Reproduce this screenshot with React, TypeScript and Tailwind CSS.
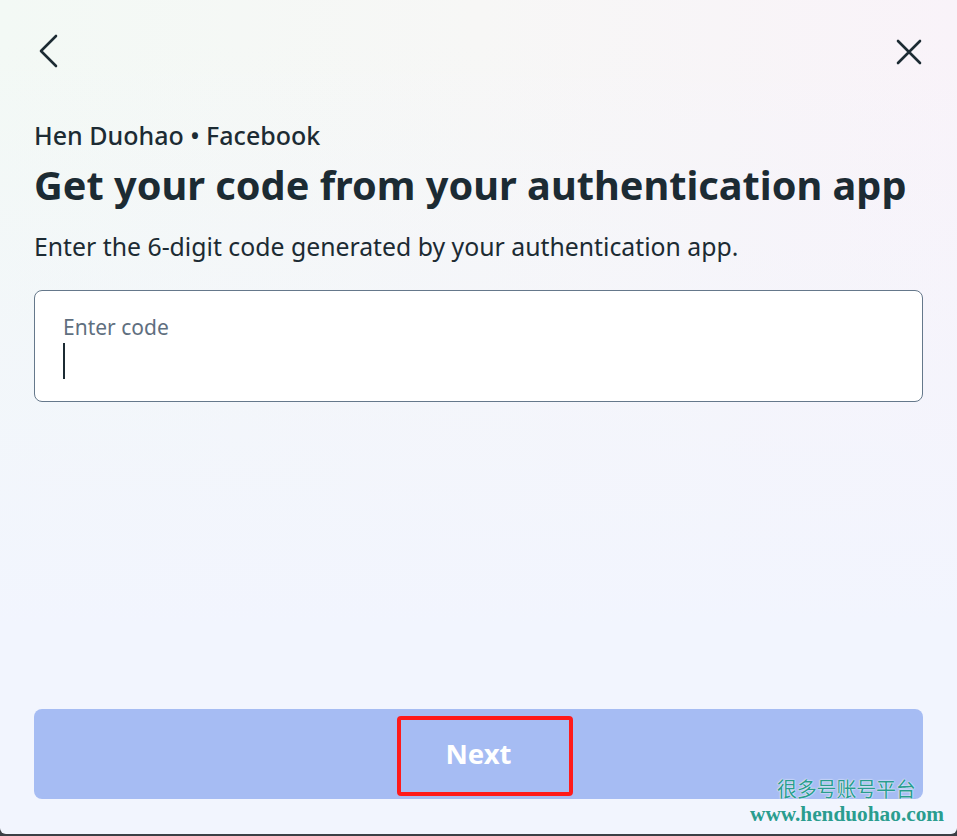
import React from 'react'

const ChevronLeft = () => (
    <svg width="26" height="38" viewBox="0 0 26 38" fill="none">
        <path d="M22 4 L7 19 L22 34" stroke="#1c2b33" strokeWidth="2.6" strokeLinecap="round" strokeLinejoin="round" />
    </svg>
)

const CloseIcon = () => (
    <svg width="28" height="28" viewBox="0 0 28 28" fill="none">
        <path d="M3 3 L25 25 M25 3 L3 25" stroke="#1c2b33" strokeWidth="2.6" strokeLinecap="round" />
    </svg>
)

const App = () => {
    return (
        <div className="w-[957px] h-[836px] bg-[#3b3f45] font-['Noto_Sans',sans-serif]">
            <div className="relative h-[834px] rounded-b-[6px] overflow-hidden flex flex-col px-[34px] bg-[linear-gradient(to_bottom,transparent_5%,#f2f5fe_75%),linear-gradient(to_right,#f3f9f5,#f7f7f6_50%,#f9f3f9)]">
                <div className="flex items-start justify-between pt-[32px] h-[70px]">
                    <button type="button"><ChevronLeft /></button>
                    <button type="button" className="mt-[6px]"><CloseIcon /></button>
                </div>

                <p className="mt-[50px] text-[25px] leading-[30px] font-medium text-[#1c2b33]">Hen Duohao • Facebook</p>
                <h1 className="mt-[11px] text-[39.7px] leading-[48px] font-bold text-[#1c2b33]">Get your code from your authentication app</h1>
                <p className="mt-[22px] text-[24.8px] leading-[30px] text-[#1c2b33]">Enter the 6-digit code generated by your authentication app.</p>

                <div className="mt-[29px] h-[112px] bg-white border border-[#65788b] rounded-[8px] px-[28px] pt-[23px]">
                    <div className="text-[21px] leading-[26px] text-[#5f6f80]">Enter code</div>
                    <div className="mt-[3px] w-[2px] h-[36px] bg-[#1c2b33]" />
                </div>

                <div className="flex-1" />

                <button type="button" className="mb-[35px] h-[90px] w-full rounded-[8px] bg-[#a6bcf3] text-white text-[27.5px] font-bold">
                    Next
                </button>

                <div className="absolute left-[397px] top-[716px] w-[176px] h-[80px] border-[4px] border-[#ff1a1a] rounded-[4px]" />

                <div className="absolute left-[777px] top-[776px] text-[20px] leading-[26px] text-[#2a9d8f] tracking-[-0.2px] font-['Noto_Sans_CJK_SC',sans-serif] [text-shadow:0_0_2px_#fff,0_0_1px_#fff]">很多号账号平台</div>
                <div className="absolute left-[750px] top-[801px] text-[21.3px] leading-[26px] font-bold text-[#2a9d8f] font-['Liberation_Serif',serif]">www.henduohao.com</div>
            </div>
        </div>
    )
}

export default App
